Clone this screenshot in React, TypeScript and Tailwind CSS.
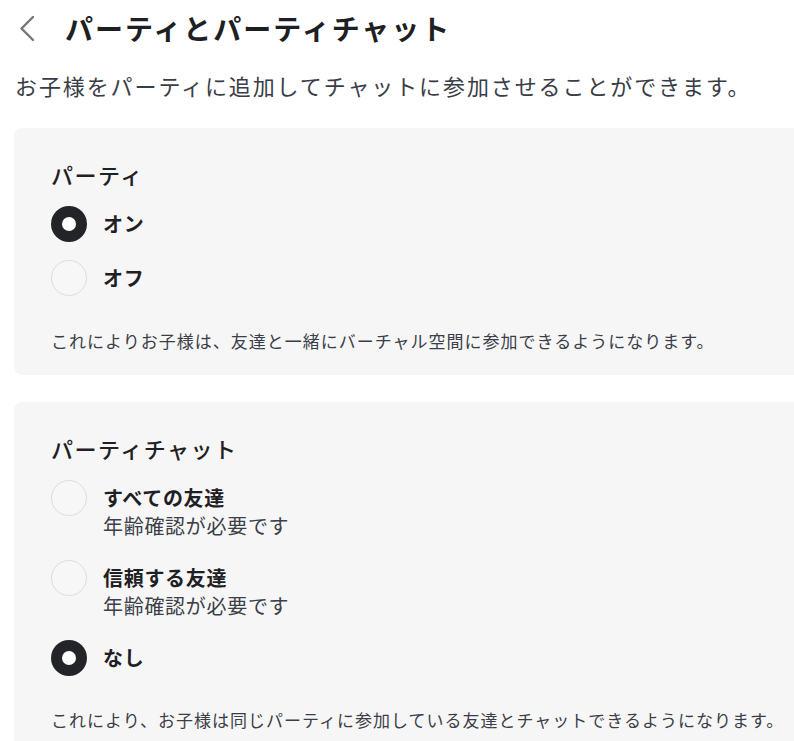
import React from "react";

type Option = { label: string; note?: string; checked: boolean };

const partyOptions: Option[] = [
  { label: "オン", checked: true },
  { label: "オフ", checked: false },
];

const chatOptions: Option[] = [
  { label: "すべての友達", note: "年齢確認が必要です", checked: false },
  { label: "信頼する友達", note: "年齢確認が必要です", checked: false },
  { label: "なし", checked: true },
];

const Radio = ({ checked }: { checked: boolean }) =>
  checked ? (
    <span className="flex h-9 w-9 shrink-0 items-center justify-center rounded-full bg-[#232428]">
      <span className="h-[14px] w-[14px] rounded-full bg-white" />
    </span>
  ) : (
    <span className="h-9 w-9 shrink-0 rounded-full border border-[#dcdce2] bg-[#f7f7f8]" />
  );

const OptionRow = ({ option }: { option: Option }) => (
  <div className="flex items-start gap-[16px]">
    <Radio checked={option.checked} />
    <div className="flex flex-col">
      <span className="text-[20px] font-bold leading-[36px] tracking-[0.7px] text-[#1f2024]">
        {option.label}
      </span>
      {option.note && (
        <span className="text-[20px] leading-[20px] tracking-[0.7px] text-[#3c3f48]">
          {option.note}
        </span>
      )}
    </div>
  </div>
);

const App = () => {
  return (
    <div
      className="w-[794px] h-[741px] overflow-hidden bg-white"
      style={{ fontFamily: '"Noto Sans CJK JP", "Noto Sans", sans-serif' }}
    >
      <div className="flex h-[56px] items-center pl-[18px]">
        <svg width="17" height="27" viewBox="0 0 17 27" fill="none" className="shrink-0">
          <path d="M15 2 L3.5 13.5 L15 25" stroke="#767676" strokeWidth="2.4" strokeLinecap="round" strokeLinejoin="round" />
        </svg>
        <h1 className="ml-[30px] text-[28px] font-bold leading-10 tracking-[2px] text-[#1e1f22]">
          パーティとパーティチャット
        </h1>
      </div>

      <p className="mt-[13px] pl-[15px] text-[22px] leading-8 tracking-[1.9px] text-[#3a3d46]">
        お子様をパーティに追加してチャットに参加させることができます。
      </p>

      <div className="mt-[27px] flex w-[840px] flex-col gap-[27px] pl-[14px]">
        <section className="rounded-lg bg-[#f6f6f6] pl-[37px] pt-[30px] pb-[22px]">
          <h2 className="text-[22px] font-medium leading-8 tracking-[1.5px] text-[#1f2024]">パーティ</h2>
          <div className="mt-[16px] flex flex-col gap-[18px]">
            {partyOptions.map((o) => (
              <OptionRow key={o.label} option={o} />
            ))}
          </div>
          <p className="mt-[33px] text-[17px] leading-6 tracking-[1px] text-[#3b3e48]">
            これによりお子様は、友達と一緒にバーチャル空間に参加できるようになります。
          </p>
        </section>

        <section className="rounded-lg bg-[#f6f6f6] pl-[37px] pt-[30px] pb-[22px]">
          <h2 className="text-[22px] font-medium leading-8 tracking-[1.5px] text-[#1f2024]">パーティチャット</h2>
          <div className="mt-[16px] flex flex-col gap-[24px]">
            {chatOptions.map((o) => (
              <OptionRow key={o.label} option={o} />
            ))}
          </div>
          <p className="mt-[32px] text-[17px] leading-6 tracking-[1px] text-[#3b3e48]">
            これにより、お子様は同じパーティに参加している友達とチャットできるようになります。
          </p>
        </section>
      </div>
    </div>
  );
};

export default App;
